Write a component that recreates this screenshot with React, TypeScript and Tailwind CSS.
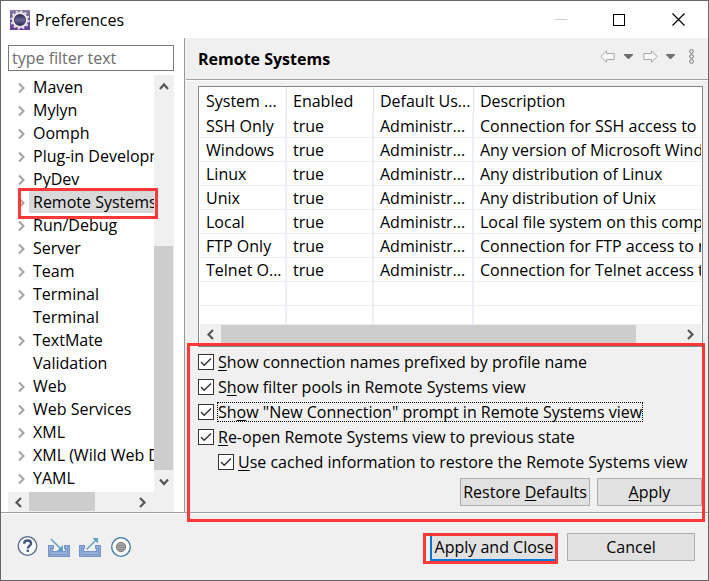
import { useState, type ReactNode } from "react";
import clsx from "clsx";

const TREE = [
  { name: "Maven" },
  { name: "Mylyn" },
  { name: "Oomph" },
  { name: "Plug-in Development" },
  { name: "PyDev" },
  { name: "Remote Systems" },
  { name: "Run/Debug" },
  { name: "Server" },
  { name: "Team" },
  { name: "Terminal" },
  { name: "Terminal", leaf: true },
  { name: "TextMate" },
  { name: "Validation", leaf: true },
  { name: "Web" },
  { name: "Web Services" },
  { name: "XML" },
  { name: "XML (Wild Web Developer)" },
  { name: "YAML" },
];

const SYSTEMS = [
  ["SSH Only", "Connection for SSH access to remote systems"],
  ["Windows", "Any version of Microsoft Windows"],
  ["Linux", "Any distribution of Linux"],
  ["Unix", "Any distribution of Unix"],
  ["Local", "Local file system on this computer"],
  ["FTP Only", "Connection for FTP access to remote systems"],
  ["Telnet O...", "Connection for Telnet access to remote systems"],
];

const CHEVRONS = {
  up: "M2 9 6 4.5 10 9",
  down: "M2 4.5 6 9 10 4.5",
  left: "M8 2 3.5 6.5 8 11",
  right: "M4 2 8.5 6.5 4 11",
};

function ScrollArrow({ dir, className }: { dir: keyof typeof CHEVRONS; className: string }) {
  return (
    <button aria-label={`Scroll ${dir}`} className={clsx("flex shrink-0 items-center justify-center", className)}>
      <svg width="12" height="13" viewBox="0 0 12 13" fill="none" stroke="#555" strokeWidth="2.2">
        <path d={CHEVRONS[dir]} />
      </svg>
    </button>
  );
}

function Key({ children }: { children: ReactNode }) {
  return <span className="underline decoration-1 underline-offset-2 [text-decoration-skip-ink:none]">{children}</span>;
}

function EclipseLogo() {
  return (
    <svg width="20" height="20" viewBox="0 0 20 20">
      <defs>
        <linearGradient id="logo-bg" x1="0" y1="0" x2="0" y2="1">
          <stop offset="0" stopColor="#8a7f9d" />
          <stop offset="0.45" stopColor="#65508f" />
          <stop offset="1" stopColor="#6b3fa0" />
        </linearGradient>
        <linearGradient id="logo-ball" x1="0" y1="0" x2="0" y2="1">
          <stop offset="0" stopColor="#2f2b50" />
          <stop offset="0.5" stopColor="#6d6798" />
          <stop offset="1" stopColor="#322c55" />
        </linearGradient>
      </defs>
      <rect width="20" height="20" fill="url(#logo-bg)" />
      <circle cx="10" cy="10" r="8.6" fill="none" stroke="#e4dfe8" strokeWidth="2" strokeDasharray="2.2 2.3" />
      <circle cx="10" cy="10" r="7" fill="#3a3155" stroke="#e8e5e7" strokeWidth="2" />
      <circle cx="10" cy="10" r="5.2" fill="url(#logo-ball)" />
    </svg>
  );
}

function TitleBar() {
  return (
    <header className="flex h-[37px] shrink-0 items-center bg-white pl-[9px]">
      <EclipseLogo />
      <h1 className="ml-[5px] flex-1">Preferences</h1>
      <button aria-label="Minimize" className="flex h-full w-[58px] items-center justify-center">
        <span className="h-px w-3 bg-[#cfcfcf]" />
      </button>
      <button aria-label="Maximize" className="flex h-full w-[58px] items-center justify-center">
        <span className="size-3 border border-black" />
      </button>
      <button aria-label="Close" className="flex h-full w-[60px] items-center justify-center">
        <svg width="13" height="13" viewBox="0 0 13 13" stroke="#000" strokeWidth="1.2">
          <path d="M.5.5l12 12M12.5.5l-12 12" />
        </svg>
      </button>
    </header>
  );
}

function Sidebar() {
  const [filter, setFilter] = useState("");
  const [selected, setSelected] = useState(5);

  return (
    <aside className="flex w-[184px] shrink-0 flex-col border-r border-[#999] bg-white pt-[7px] pl-[7px] pr-[10px]">
      <input
        type="text"
        aria-label="Filter preferences"
        value={filter}
        onChange={(e) => setFilter(e.target.value)}
        placeholder="type filter text"
        className="h-[26px] w-full border border-[#7a7a7a] px-[3px] placeholder:text-[#6d6d6d]"
      />
      <div className="mt-1 flex flex-1">
        <ul className="min-w-0 flex-1">
          {TREE.map((item, i) => (
            <li key={i} className="relative flex h-[23px] items-center pl-2">
              <span className="flex w-[13px] shrink-0">
                {!item.leaf && (
                  <svg width="10" height="12" viewBox="0 0 10 12" fill="none" stroke="#a2a2a2" strokeWidth="2">
                    <path d="M3 2.500 7.500 7 3 11.500" />
                  </svg>
                )}
              </span>
              <button
                onClick={() => setSelected(i)}
                className={clsx(
                  "h-[22px] min-w-0 flex-1 overflow-hidden pl-1 text-left leading-[22px] whitespace-nowrap",
                  selected === i && "bg-[#d9d9d9]",
                )}
              >
                {item.name}
              </button>
              {item.name === "Remote Systems" && (
                <span className="pointer-events-none absolute -top-[2px] -right-1 -bottom-[6px] left-[10px] border-3 border-[#fc3838]" />
              )}
            </li>
          ))}
        </ul>
        <div className="flex w-5 shrink-0 flex-col bg-[#f0f0f0]">
          <ScrollArrow dir="up" className="h-[22px] w-full" />
          <div className="flex flex-1 flex-col justify-end">
            <div className="mr-px h-[224px] bg-[#cdcdcd]" />
          </div>
          <ScrollArrow dir="down" className="h-[22px] w-full" />
        </div>
      </div>
      <div className="flex h-5 shrink-0 bg-[#f0f0f0] pr-5">
        <ScrollArrow dir="left" className="h-full w-[21px]" />
        <div className="h-[19px] w-[66px] bg-[#cdcdcd]" />
        <div className="flex-1" />
        <ScrollArrow dir="right" className="h-full w-6" />
      </div>
    </aside>
  );
}

function DropArrow({ label }: { label: string }) {
  return (
    <button aria-label={label}>
      <svg width="9" height="5" viewBox="0 0 9 5" fill="#6f6f6f">
        <path d="M0 0h9v1L5 5H4L0 1z" />
      </svg>
    </button>
  );
}

function PageHeader() {
  return (
    <div className="flex h-[42px] shrink-0 items-center border-b border-[#a0a0a0] pr-[13px] pl-3 shadow-[0_1px_0_#fff]">
      <h2 className="flex-1 font-bold">Remote Systems</h2>
      <div className="mb-1 flex items-center">
        <button aria-label="Back">
          <svg width="15" height="13" viewBox="0 0 15 13" fill="#f8f8f8" stroke="#a8a8a8">
            <path d="M6.5.8.8 6.5l5.7 5.7V9.5h7.7v-6H6.5z" />
          </svg>
        </button>
        <span className="w-[9px]" />
        <DropArrow label="Back history" />
        <span className="w-[10px]" />
        <button aria-label="Forward">
          <svg width="15" height="13" viewBox="0 0 15 13" fill="#f8f8f8" stroke="#a8a8a8">
            <path d="M8.5.8l5.7 5.7-5.7 5.7V9.5H.8v-6h7.7z" />
          </svg>
        </button>
        <span className="w-2" />
        <DropArrow label="Forward history" />
        <span className="w-[13px]" />
        <button aria-label="View menu">
          <svg width="7" height="15" viewBox="0 0 7 15" fill="#fff" stroke="#6a6a6a">
            <circle cx="3.5" cy="2.5" r="1.8" />
            <circle cx="3.5" cy="7.5" r="1.8" />
            <circle cx="3.5" cy="12.5" r="1.8" />
          </svg>
        </button>
      </div>
    </div>
  );
}

function SystemsTable() {
  return (
    <div className="mt-[6px] mr-[5px] ml-3 border border-[#828790] bg-white px-px pb-[3px]">
      <table className="w-full table-fixed border-separate border-spacing-0 text-left whitespace-nowrap [&_td]:overflow-hidden [&_td]:border-b [&_td]:border-[#ededed] [&_td]:p-0 [&_td]:pl-[6px] [&_td:not(:last-child)]:border-r-2 [&_td:not(:last-child)]:border-r-[#ebeff7] [&_th]:p-0 [&_th]:pl-[6px] [&_th]:font-normal [&_th:not(:last-child)]:border-r [&_th:not(:last-child)]:border-[#e2e2e2]">
        <colgroup>
          <col className="w-[87px]" />
          <col className="w-[87px]" />
          <col className="w-[100px]" />
          <col />
        </colgroup>
        <thead>
          <tr className="h-[27px]">
            <th>System ...</th>
            <th>Enabled</th>
            <th>Default Us...</th>
            <th>Description</th>
          </tr>
        </thead>
        <tbody>
          {SYSTEMS.map(([type, description]) => (
            <tr key={type} className="h-6">
              <td>{type}</td>
              <td>true</td>
              <td>Administr...</td>
              <td>{description}</td>
            </tr>
          ))}
          <tr className="h-6">
            <td />
            <td />
            <td />
            <td />
          </tr>
          <tr className="h-[19px]">
            <td />
            <td />
            <td />
            <td />
          </tr>
        </tbody>
      </table>
      <div className="flex h-[18px] bg-[#f0f0f0]">
        <ScrollArrow dir="left" className="h-full w-[21px]" />
        <div className="flex-1 bg-[#cdcdcd]" />
        <div className="w-[43px]" />
        <ScrollArrow dir="right" className="h-full w-[22px]" />
      </div>
    </div>
  );
}

function Option({ id, focused, children }: { id: string; focused?: boolean; children: ReactNode }) {
  return (
    <div className="flex h-[25px] items-center">
      <span className="grid size-4 shrink-0">
        <input
          id={id}
          type="checkbox"
          defaultChecked
          className="peer col-start-1 row-start-1 size-4 appearance-none border border-[#333] bg-white"
        />
        <svg
          className="pointer-events-none invisible col-start-1 row-start-1 peer-checked:visible"
          width="16"
          height="16"
          viewBox="0 0 16 16"
          fill="none"
          stroke="#333"
          strokeWidth="1.4"
        >
          <path d="M3 8l3.2 3.2L13 4.4" />
        </svg>
      </span>
      <label
        htmlFor={id}
        className={clsx("ml-1 leading-[18px] whitespace-nowrap", focused && "outline-1 outline-dotted outline-black")}
      >
        {children}
      </label>
    </div>
  );
}

function PushButton({ className, children }: { className: string; children: ReactNode }) {
  return (
    <button className={clsx("h-7 border border-[#adadad] bg-[#e1e1e1] whitespace-nowrap", className)}>
      {children}
    </button>
  );
}

function Options() {
  return (
    <section className="relative flex-1 pt-[2px] pr-[6px] pl-3">
      <Option id="prefix">
        <Key>S</Key>how connection names prefixed by profile name
      </Option>
      <Option id="pools">
        S<Key>h</Key>ow filter pools in Remote Systems view
      </Option>
      <Option id="prompt" focused>
        Sh<Key>o</Key>w "New Connection" prompt in Remote Systems view
      </Option>
      <Option id="reopen">
        <Key>R</Key>e-open Remote Systems view to previous state
      </Option>
      <div className="pl-5">
        <Option id="cached">
          <Key>U</Key>se cached information to restore the Remote Systems view
        </Option>
      </div>
      <div className="mt-1 flex justify-end gap-[7px]">
        <PushButton className="w-[130px]">
          Restore <Key>D</Key>efaults
        </PushButton>
        <PushButton className="w-[105px]">
          <Key>A</Key>pply
        </PushButton>
      </div>
      <span className="pointer-events-none absolute -top-1 right-[3px] -bottom-[10px] left-px border-3 border-[#fc3838]" />
    </section>
  );
}

function TrayIcon({ out }: { out?: boolean }) {
  return (
    <svg width="22" height="20" viewBox="0 0 22 20" fill="none">
      <path
        d="M.6 8.600H5.400V11.400H4.400v3.200h13.200v-3.200h-1V8.600h4.800v10.800H.6z"
        fill="#9fb6dc"
        stroke="#7593c8"
        strokeWidth="1.200"
      />
      <path d="M2.500 10v7.500h17V10" stroke="#6f8dc3" strokeWidth=".8" />
      {out ? (
        <>
          <path d="M7.500 12.500 17 3" stroke="#5c9fc0" strokeWidth="1.500" />
          <path d="M13.500 1H19v5.500z" fill="#5c9fc0" />
        </>
      ) : (
        <>
          <path d="M3 2 13 12" stroke="#5c9fc0" strokeWidth="1.500" />
          <path d="M15 8v6H9z" fill="#5c9fc0" />
        </>
      )}
    </svg>
  );
}

function Footer() {
  return (
    <footer className="flex h-[68px] shrink-0 items-center border-t border-[#a0a0a0] pr-[13px] pl-4 shadow-[inset_0_1px_0_#fff]">
      <div className="flex flex-1 items-center">
        <button aria-label="Help" className="size-[21px]">
          <svg width="21" height="21" viewBox="0 0 21 21" fill="none">
            <circle cx="10.500" cy="10" r="9.300" fill="#f7f8fb" stroke="#596987" strokeWidth="1.300" />
            <path d="M7.200 7.700C7.200 5.500 8.700 4.500 10.600 4.500s3.400 1.100 3.400 2.900c0 2.400-3.200 2.400-3.200 5" stroke="#43577c" strokeWidth="2.300" />
            <path d="M9.600 13.700h2.400v2.200H9.600z" fill="#43577c" />
          </svg>
        </button>
        <button aria-label="Import" className="ml-[10px]">
          <TrayIcon />
        </button>
        <button aria-label="Export" className="ml-[9px]">
          <TrayIcon out />
        </button>
        <button aria-label="Record" className="ml-[10px]">
          <svg width="20" height="20" viewBox="0 0 20 20">
            <circle cx="10" cy="10" r="9.300" fill="#fff" stroke="#3c75a5" strokeWidth="1.300" />
            <circle cx="10" cy="10" r="4.700" fill="#a7a7a7" stroke="#777" />
            <path d="M6.500 8.500h7M6 10.500h8M7 12.500h6" stroke="#8b8b8b" />
          </svg>
        </button>
      </div>
      <div className="relative mr-[9px] pl-[7px]">
        <button className="h-7 w-[128px] border-2 border-[#0078d7] bg-[#e1e1e1] whitespace-nowrap">
          Apply and Close
        </button>
        <span className="pointer-events-none absolute top-0 right-0 -bottom-[3px] left-0 border-3 border-[#fc3838]" />
      </div>
      <PushButton className="w-[128px]">Cancel</PushButton>
    </footer>
  );
}

export default function App() {
  return (
    <main className="flex min-h-screen w-full flex-col border border-[#666] bg-[#f0f0f0] font-['Open_Sans',sans-serif] text-base leading-[22px] text-black">
      <TitleBar />
      <div className="flex flex-1">
        <Sidebar />
        <div className="flex min-w-0 flex-1 flex-col pl-px">
          <PageHeader />
          <SystemsTable />
          <Options />
        </div>
      </div>
      <Footer />
    </main>
  );
}
